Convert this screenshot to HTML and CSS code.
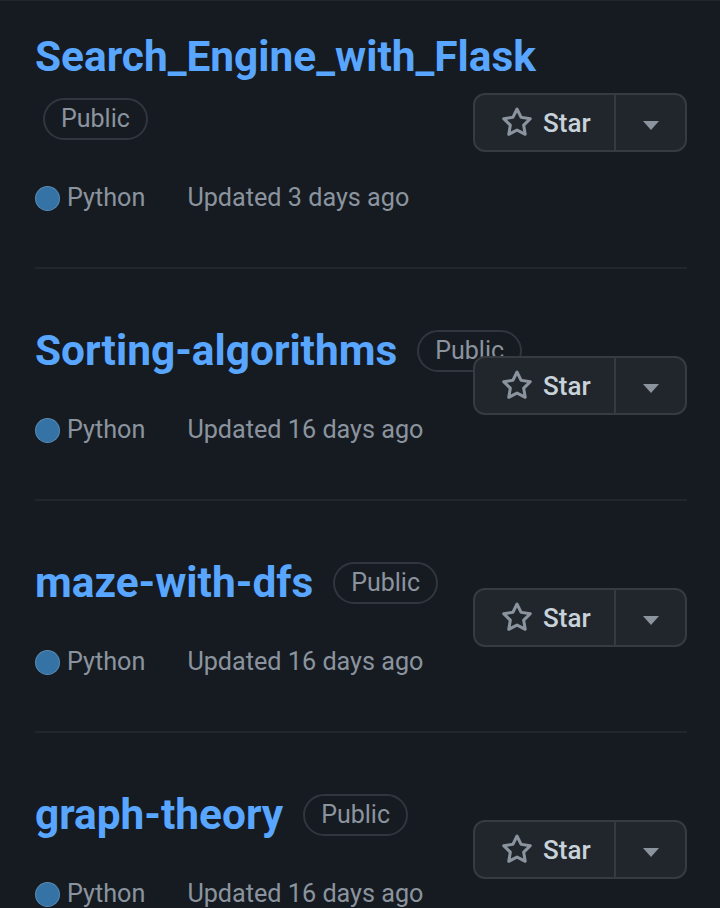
FILE: index.html
```html
<!DOCTYPE html>
<html lang="en">
<head>
<meta charset="utf-8">
<title>Repositories</title>
<link rel="stylesheet" href="styles.css">
</head>
<body>
<svg width="0" height="0" class="defs" aria-hidden="true">
  <defs>
    <symbol id="star" viewBox="0 0 16 16">
      <path d="M8 .25a.75.75 0 0 1 .673.418l1.882 3.815 4.21.612a.75.75 0 0 1 .416 1.279l-3.046 2.97.719 4.192a.751.751 0 0 1-1.088.791L8 12.347l-3.766 1.98a.75.75 0 0 1-1.088-.79l.72-4.194L.818 6.374a.75.75 0 0 1 .416-1.28l4.21-.611L7.327.668A.75.75 0 0 1 8 .25Zm0 2.445L6.615 5.5a.75.75 0 0 1-.564.41l-3.097.45 2.24 2.184a.75.75 0 0 1 .216.664l-.528 3.084 2.769-1.456a.75.75 0 0 1 .698 0l2.77 1.456-.53-3.084a.75.75 0 0 1 .216-.664l2.24-2.183-3.096-.45a.75.75 0 0 1-.564-.41L8 2.694Z"/>
    </symbol>
  </defs>
</svg>
<ul class="repo-list">
  <li class="repo repo-first">
    <div class="repo-body">
      <div class="repo-info">
        <div class="title-row">
          <a class="repo-name" href="#">Search_Engine_with_Flask</a>
          <span class="badge">Public</span>
        </div>
        <div class="meta">
          <span class="lang"><span class="lang-dot"></span>Python</span>
          <span class="updated">Updated 3 days ago</span>
        </div>
      </div>
      <div class="star-btn">
        <span class="star-main"><svg class="star-icon"><use href="#star"/></svg>Star</span>
        <span class="star-drop"><span class="caret"></span></span>
      </div>
    </div>
  </li>
  <li class="repo">
    <div class="repo-body">
      <div class="repo-info">
        <div class="title-row">
          <a class="repo-name" href="#">Sorting-algorithms</a>
          <span class="badge">Public</span>
        </div>
        <div class="meta">
          <span class="lang"><span class="lang-dot"></span>Python</span>
          <span class="updated">Updated 16 days ago</span>
        </div>
      </div>
      <div class="star-btn">
        <span class="star-main"><svg class="star-icon"><use href="#star"/></svg>Star</span>
        <span class="star-drop"><span class="caret"></span></span>
      </div>
    </div>
  </li>
  <li class="repo">
    <div class="repo-body">
      <div class="repo-info">
        <div class="title-row">
          <a class="repo-name" href="#">maze-with-dfs</a>
          <span class="badge">Public</span>
        </div>
        <div class="meta">
          <span class="lang"><span class="lang-dot"></span>Python</span>
          <span class="updated">Updated 16 days ago</span>
        </div>
      </div>
      <div class="star-btn">
        <span class="star-main"><svg class="star-icon"><use href="#star"/></svg>Star</span>
        <span class="star-drop"><span class="caret"></span></span>
      </div>
    </div>
  </li>
  <li class="repo">
    <div class="repo-body">
      <div class="repo-info">
        <div class="title-row">
          <a class="repo-name" href="#">graph-theory</a>
          <span class="badge">Public</span>
        </div>
        <div class="meta">
          <span class="lang"><span class="lang-dot"></span>Python</span>
          <span class="updated">Updated 16 days ago</span>
        </div>
      </div>
      <div class="star-btn">
        <span class="star-main"><svg class="star-icon"><use href="#star"/></svg>Star</span>
        <span class="star-drop"><span class="caret"></span></span>
      </div>
    </div>
  </li>
</ul>
</body>
</html>
```

FILE: styles.css
```css
html, body {
  margin: 0;
  padding: 0;
  background: #161b22;
}

body {
  font-family: Roboto, "Noto Sans", "Liberation Sans", sans-serif;
  color: #8b949e;
  border-top: 1px solid #21262d;
}

.defs {
  position: absolute;
  width: 0;
  height: 0;
  overflow: hidden;
}

.repo-list {
  list-style: none;
  margin: 0;
  padding: 0 33px 0 35px;
}

.repo {
  padding: 61px 0 54px;
  border-bottom: 2px solid #21262d;
}

.repo-first {
  padding-top: 35px;
}

.repo-body {
  display: grid;
  grid-template-areas: "stack";
}

.repo-info {
  grid-area: stack;
  display: flex;
  flex-direction: column;
  gap: 43px;
}

.title-row {
  display: flex;
  flex-wrap: wrap;
  align-items: center;
  column-gap: 12px;
  row-gap: 20px;
  max-width: 560px;
}

.repo-name {
  font-size: 42.4px;
  font-weight: 700;
  line-height: 42px;
  color: #58a6ff;
  text-decoration: none;
}

.badge {
  box-sizing: border-box;
  height: 42px;
  margin-left: 8px;
  padding: 0 16px;
  border: 2px solid #30363d;
  border-radius: 21px;
  font-size: 25px;
  line-height: 38px;
  color: #8b949e;
}

.meta {
  display: flex;
  align-items: center;
  gap: 42px;
  font-size: 25.2px;
  line-height: 30px;
  color: #8b949e;
}

.lang {
  display: flex;
  align-items: center;
  gap: 7px;
}

.lang-dot {
  box-sizing: border-box;
  width: 25px;
  height: 25px;
  border-radius: 50%;
  background: #3572a5;
  border: 1px solid rgba(255, 255, 255, 0.18);
}

.star-btn {
  grid-area: stack;
  justify-self: end;
  align-self: center;
  display: flex;
  box-sizing: border-box;
  width: 214px;
  height: 59px;
  margin-bottom: 4px;
  background: #21262d;
  border: 2px solid #363b42;
  border-radius: 12px;
}

.star-main {
  display: flex;
  align-items: center;
  gap: 10px;
  width: 141px;
  padding-left: 26px;
  box-sizing: border-box;
  border-right: 2px solid #363b42;
  font-size: 26px;
  font-weight: 500;
  color: #c9d1d9;
}

.star-icon {
  width: 32px;
  height: 32px;
  fill: #8b949e;
}

.star-drop {
  flex: 1;
  display: flex;
  align-items: center;
  justify-content: center;
}

.caret {
  width: 0;
  height: 0;
  margin-top: 6px;
  border-left: 8px solid transparent;
  border-right: 8px solid transparent;
  border-top: 9px solid #8b949e;
}
```
